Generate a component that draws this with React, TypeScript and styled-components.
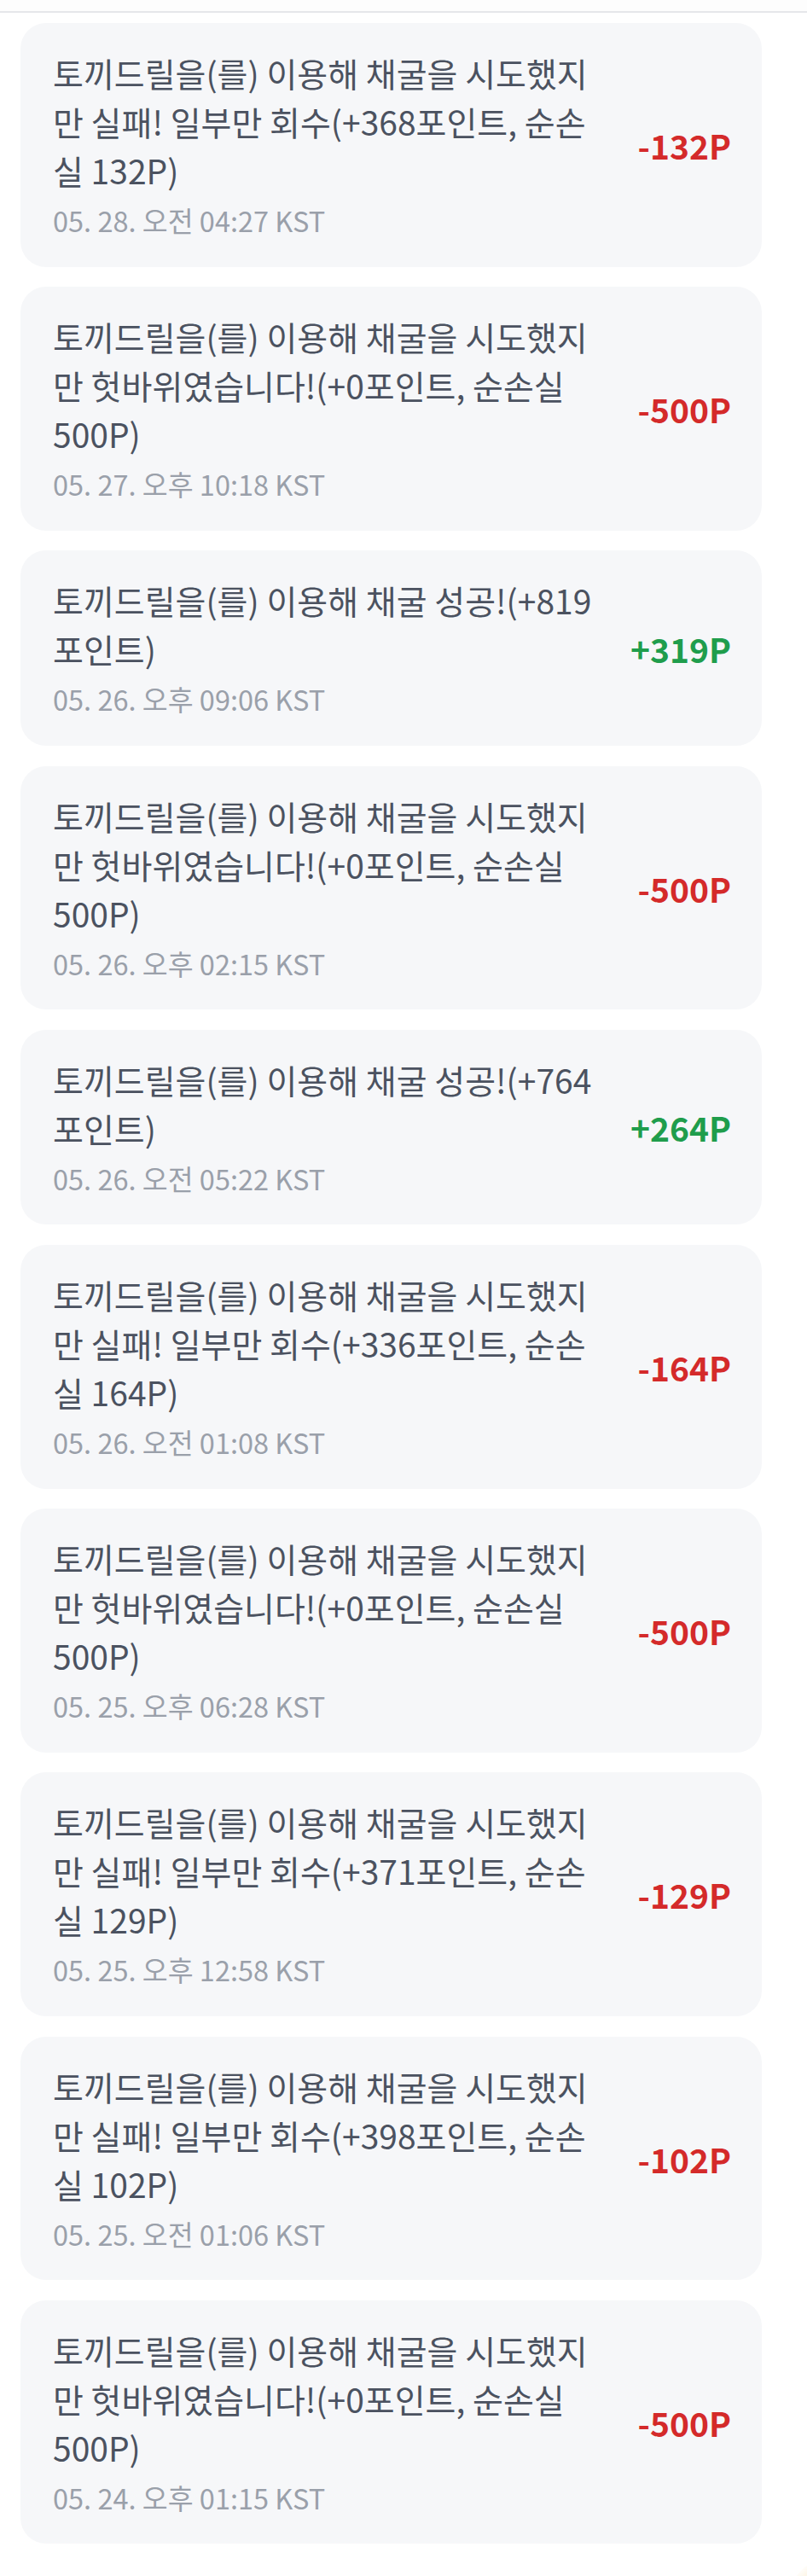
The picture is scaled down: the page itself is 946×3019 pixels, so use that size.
import React from "react";
import styled, { createGlobalStyle } from "styled-components";

const GlobalStyle = createGlobalStyle`
  html, body {
    margin: 0;
    padding: 0;
    background: #ffffff;
  }
  body {
    font-family: "Noto Sans CJK KR", "Noto Sans", sans-serif;
    -webkit-font-smoothing: antialiased;
  }
`;

const Page = styled.div`
  position: relative;
  min-height: 3019px;
  overflow: hidden;
`;

const TopBar = styled.div`
  height: 13px;
  background: #fdfdfd;
  border-bottom: 2px solid #e6e7ea;
`;

const List = styled.div`
  display: flex;
  flex-direction: column;
  gap: 23.6px;
  padding: 12px 53px 24px 24px;
`;

const Card = styled.div`
  display: flex;
  align-items: center;
  background: #f6f7f9;
  border-radius: 30px;
  padding: 30px 36px 34.6px 38px;
`;

const Body = styled.div`
  flex: 1;
  min-width: 0;
`;

const Message = styled.div`
  color: #4b5260;
  font-size: 39px;
  line-height: 57px;
  font-weight: 400;
`;

const Time = styled.div`
  margin-top: 10px;
  color: #9aa0aa;
  font-size: 32.5px;
  line-height: 40px;
`;

const Amount = styled.div<{ $gain: boolean }>`
  flex-shrink: 0;
  width: 120px;
  margin-left: 26px;
  padding-top: 5px;
  text-align: right;
  font-size: 39px;
  font-weight: 700;
  color: ${(p) => (p.$gain ? "#1f9d4c" : "#d42a2a")};
`;

const Glow = styled.div`
  position: absolute;
  right: -70px;
  bottom: -70px;
  width: 90px;
  height: 90px;
  border-radius: 50%;
  background: radial-gradient(circle, #f7e7bf 0%, #fdf6e6 55%, rgba(255, 255, 255, 0) 75%);
`;

interface Entry {
  id: number;
  text: string;
  time: string;
  amount: number;
}

const entries: Entry[] = [
  { id: 1, text: "토끼드릴을(를) 이용해 채굴을 시도했지만 실패! 일부만 회수(+368포인트, 순손실 132P)", time: "05. 28. 오전 04:27 KST", amount: -132 },
  { id: 2, text: "토끼드릴을(를) 이용해 채굴을 시도했지만 헛바위였습니다!(+0포인트, 순손실 500P)", time: "05. 27. 오후 10:18 KST", amount: -500 },
  { id: 3, text: "토끼드릴을(를) 이용해 채굴 성공!(+819포인트)", time: "05. 26. 오후 09:06 KST", amount: 319 },
  { id: 4, text: "토끼드릴을(를) 이용해 채굴을 시도했지만 헛바위였습니다!(+0포인트, 순손실 500P)", time: "05. 26. 오후 02:15 KST", amount: -500 },
  { id: 5, text: "토끼드릴을(를) 이용해 채굴 성공!(+764포인트)", time: "05. 26. 오전 05:22 KST", amount: 264 },
  { id: 6, text: "토끼드릴을(를) 이용해 채굴을 시도했지만 실패! 일부만 회수(+336포인트, 순손실 164P)", time: "05. 26. 오전 01:08 KST", amount: -164 },
  { id: 7, text: "토끼드릴을(를) 이용해 채굴을 시도했지만 헛바위였습니다!(+0포인트, 순손실 500P)", time: "05. 25. 오후 06:28 KST", amount: -500 },
  { id: 8, text: "토끼드릴을(를) 이용해 채굴을 시도했지만 실패! 일부만 회수(+371포인트, 순손실 129P)", time: "05. 25. 오후 12:58 KST", amount: -129 },
  { id: 9, text: "토끼드릴을(를) 이용해 채굴을 시도했지만 실패! 일부만 회수(+398포인트, 순손실 102P)", time: "05. 25. 오전 01:06 KST", amount: -102 },
  { id: 10, text: "토끼드릴을(를) 이용해 채굴을 시도했지만 헛바위였습니다!(+0포인트, 순손실 500P)", time: "05. 24. 오후 01:15 KST", amount: -500 },
];

const HistoryCard = ({ text, time, amount }: Entry) => (
  <Card>
    <Body>
      <Message>{text}</Message>
      <Time>{time}</Time>
    </Body>
    <Amount $gain={amount > 0}>
      {amount > 0 ? `+${amount}P` : `${amount}P`}
    </Amount>
  </Card>
);

const App = () => (
  <Page>
    <GlobalStyle />
    <TopBar />
    <List>
      {entries.map((e) => (
        <HistoryCard key={e.id} {...e} />
      ))}
    </List>
    <Glow />
  </Page>
);

export default App;
